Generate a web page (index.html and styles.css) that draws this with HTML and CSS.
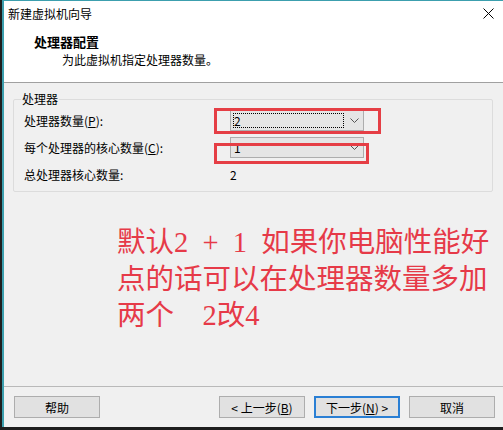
FILE: index.html
```html
<!DOCTYPE html>
<html>
<head>
	<meta charset="utf-8">
	<title>新建虚拟机向导</title>
	<link rel="stylesheet" href="styles.css">
</head>
<body>
<div class="window">
	<div class="titlebar">
		<span class="caption">新建虚拟机向导</span>
		<svg class="close" width="11" height="11" viewBox="0 0 11 11"><path d="M0.5 0.5L10.5 10.5M10.5 0.5L0.5 10.5" stroke="#000" stroke-width="1"/></svg>
	</div>
	<div class="head">
		<div class="head-title">处理器配置</div>
		<div class="head-sub">为此虚拟机指定处理器数量。</div>
	</div>
	<div class="content">
		<fieldset class="group">
			<legend>处理器</legend>
			<div class="row">
				<span class="label">处理器数量(<u>P</u>):</span>
				<div class="combo">
					<span class="val focus">2</span>
					<span class="arrow"><svg width="9" height="5" viewBox="0 0 9 5"><path d="M0.5 0.5L4.5 4.5L8.5 0.5" fill="none" stroke="#555" stroke-width="1"/></svg></span>
					<span class="mark mark-count"></span>
				</div>
			</div>
			<div class="row">
				<span class="label">每个处理器的核心数量(<u>C</u>):</span>
				<div class="combo">
					<span class="val">1</span>
					<span class="arrow"><svg width="9" height="5" viewBox="0 0 9 5"><path d="M0.5 0.5L4.5 4.5L8.5 0.5" fill="none" stroke="#555" stroke-width="1"/></svg></span>
					<span class="mark mark-cores"></span>
				</div>
			</div>
			<div class="row row-total">
				<span class="label">总处理器核心数量:</span>
				<span class="total">2</span>
			</div>
		</fieldset>
		<div class="note">
			<div class="note-line">默认2 + 1 如果你电脑性能好</div>
			<div class="note-line">点的话可以在处理器数量多加</div>
			<div class="note-line">两个  2改4</div>
		</div>
	</div>
	<div class="footer">
		<button class="btn">帮助</button>
		<button class="btn back">&lt; 上一步(<u>B</u>)</button>
		<button class="btn next">下一步(<u>N</u>) &gt;</button>
		<button class="btn cancel">取消</button>
	</div>
</div>
</body>
</html>
```

FILE: styles.css
```css
body{
	margin:0;
	background:#1e1e1e;
	font-family:"Noto Sans CJK SC", sans-serif;
	font-size:12px;
	color:#000;
}
.window{
	margin-left:2px;
	width:501px;
	height:427px;
	box-sizing:border-box;
	border-left:2px solid #3c9fae;
	border-top:1px solid #3c9fae;
	background:#f0f0f0;
	display:flex;
	flex-direction:column;
}
.titlebar{
	height:25px;
	background:#fff;
	display:flex;
	align-items:center;
	padding:0 9px 0 4px;
}
.caption{flex:auto;line-height:24px;}
.close{flex:none;margin-top:-1px;}
.head{
	background:#fff;
	padding:8px 0 14px 30px;
	border-bottom:1px solid #a0a0a0;
}
.head-title{font-weight:bold;font-size:13px;line-height:16px;}
.head-sub{margin:2px 0 0 28px;line-height:16px;}

.content{flex:auto;min-height:0;}
.group{
	margin:8px 10px 0 9px;
	padding:3px 10px 6px 10px;
	border:1px solid #dcdcdc;
	border-radius:2px;
}
.group legend{
	padding:0 1px;
	margin-left:-3px;
	line-height:16px;
}
.row{
	display:flex;
	align-items:center;
	height:21px;
	margin-bottom:6px;
}
.row-total{margin:2px 0 0;}
.label{flex:none;width:206px;line-height:16px;}
.combo{
	position:relative;
	width:134px;
	height:21px;
	box-sizing:border-box;
	border:1px solid #adadad;
	background:#e5e5e5;
	display:flex;
}
.val{
	flex:auto;
	margin:2px;
	padding-left:1px;
	line-height:15px;
}
.val.focus{outline:1px dotted #000;outline-offset:-1px;}
.arrow{
	flex:none;
	width:17px;
	display:flex;
	align-items:center;
	justify-content:center;
}
.mark{
	position:absolute;
	box-sizing:border-box;
	border:3px solid #e53e45;
}
.mark-count{left:-17px;top:-3px;width:167px;height:26px;}
.mark-cores{left:-17px;top:5px;width:155px;height:21px;}
.total{line-height:16px;}

.note{
	margin-top:33px;
	padding-left:113px;
	font-family:"Liberation Serif", "Noto Sans CJK SC", serif;
	font-size:28.5px;
	line-height:36.5px;
	color:#e63a48;
}
.note-line{
	white-space:pre;
	word-spacing:0.25em;
}

.footer{
	display:flex;
	border-top:1px solid #b9b9b9;
	padding:9px 8px 9px 10px;
}
.btn{
	width:86px;
	height:22px;
	padding:0;
	border:1px solid #adadad;
	background:#e1e1e1;
	font-family:inherit;
	font-size:12px;
	color:#000;
}
.back{margin-left:auto;}
.next{margin-left:9px;border:2px solid #2a7fd4;}
.cancel{margin-left:9px;}
```
